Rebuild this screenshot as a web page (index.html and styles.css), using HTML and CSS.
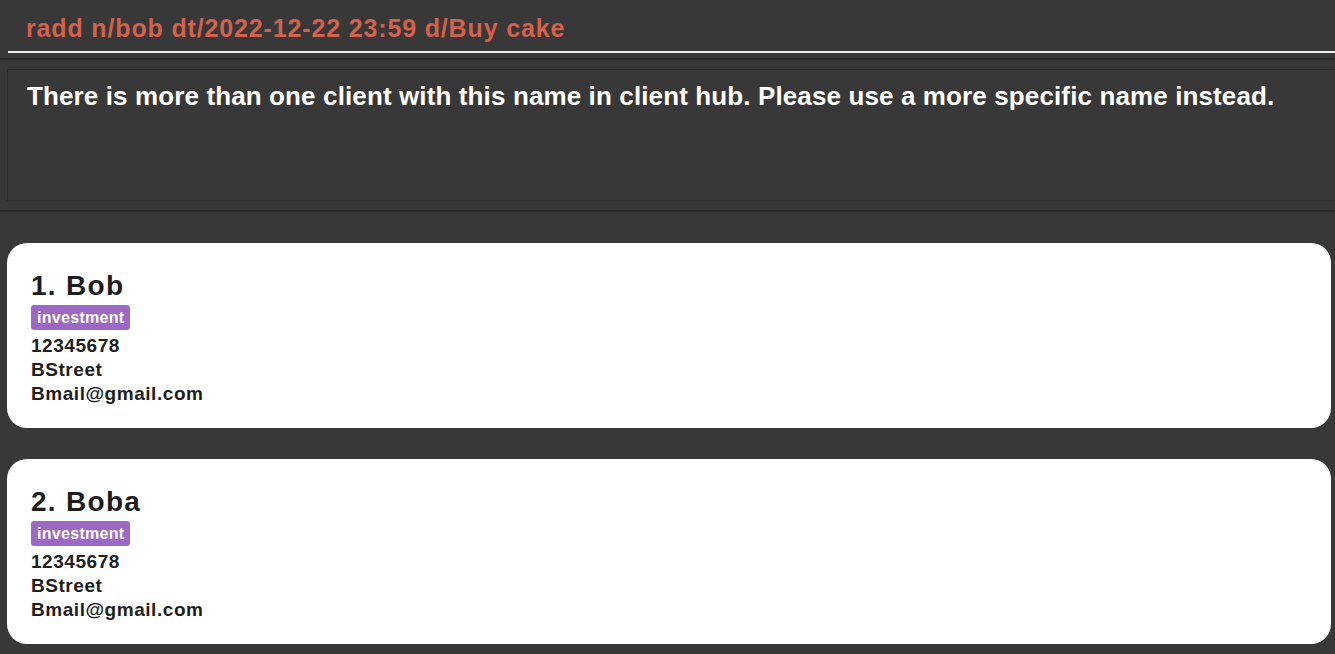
FILE: index.html
```html
<!DOCTYPE html>
<html lang="en">
<head>
<meta charset="utf-8">
<title>Client Hub</title>
<link rel="stylesheet" href="styles.css">
</head>
<body>
<div class="app">
  <div class="command-box">
    <div class="command-input">radd n/bob dt/2022-12-22 23:59 d/Buy cake</div>
  </div>
  <div class="result-pane">
    <div class="result-box">There is more than one client with this name in client hub. Please use a more specific name instead.</div>
  </div>
  <div class="client-list">
    <div class="card">
      <div class="card-name">1. Bob</div>
      <div class="tags"><span class="tag">investment</span></div>
      <div class="field">12345678</div>
      <div class="field">BStreet</div>
      <div class="field">Bmail@gmail.com</div>
    </div>
    <div class="card">
      <div class="card-name">2. Boba</div>
      <div class="tags"><span class="tag">investment</span></div>
      <div class="field">12345678</div>
      <div class="field">BStreet</div>
      <div class="field">Bmail@gmail.com</div>
    </div>
  </div>
</div>
</body>
</html>
```
FILE: styles.css
```css
html, body {
  margin: 0;
  padding: 0;
  height: 100%;
  background: #383838;
  overflow: hidden;
}
body {
  font-family: "Liberation Sans", Arial, sans-serif;
  font-weight: bold;
}
.app {
  display: flex;
  flex-direction: column;
  width: 1340px;
}
.command-box {
  height: 60px;
  box-sizing: border-box;
  padding-left: 8px;
  padding-top: 14px;
  border-bottom: 2px solid #2c2c2c;
}
.command-input {
  color: #d4614c;
  font-size: 25px;
  letter-spacing: 0.85px;
  line-height: 28px;
  padding-left: 18px;
  padding-bottom: 9px;
  border-bottom: 2px solid #f0f0f0;
}
.result-pane {
  padding: 9px 0 9px 7px;
  border-bottom: 2px solid #2c2c2c;
}
.result-box {
  height: 132px;
  box-sizing: border-box;
  border: 1px solid #2c2c2c;
  border-right: none;
  color: #ffffff;
  font-size: 26px;
  letter-spacing: 0.12px;
  line-height: 30px;
  padding: 11px 0 0 19px;
}
.client-list {
  display: flex;
  flex-direction: column;
  gap: 31px;
  padding: 31px 0 0 7px;
  width: 1324px;
}
.card {
  background: #ffffff;
  border-radius: 20px;
  height: 185px;
  box-sizing: border-box;
  padding: 27px 0 0 24px;
  display: flex;
  flex-direction: column;
  color: #1d1d1d;
}
.card-name {
  font-size: 28px;
  letter-spacing: 1.3px;
  line-height: 32px;
}
.tags {
  display: flex;
  margin-top: 3px;
  margin-bottom: 4px;
}
.tag {
  background: #9d67c4;
  color: #ffffff;
  font-size: 16px;
  letter-spacing: 0.3px;
  line-height: 25px;
  padding: 0 6px;
  border-radius: 3px;
}
.field {
  font-size: 19px;
  letter-spacing: 0.55px;
  line-height: 24px;
}
```
